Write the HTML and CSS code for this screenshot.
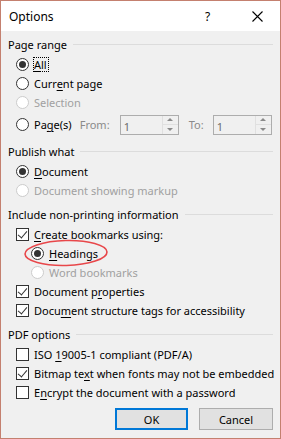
FILE: index.html
```html
<!DOCTYPE html>
<html lang="en">
<head>
  <meta charset="UTF-8">
  <title>Options</title>
  <link rel="stylesheet" href="styles.css">
</head>
<body>
  <div class="dialog">
    <div class="titlebar">
      <span class="title">Options</span>
      <span class="help">?</span>
      <svg class="close" width="11" height="11" viewBox="0 0 11 11"><path d="M0.5 0.5 L10.5 10.5 M10.5 0.5 L0.5 10.5" stroke="#000" stroke-width="1.1" fill="none"/></svg>
    </div>

    <div class="content">
      <!-- Page range -->
      <div class="group-title first"><span>Page range</span><i></i></div>
      <div class="row"><span class="radio checked"></span><span class="label focus"><u>A</u>ll</span></div>
      <div class="row"><span class="radio"></span><span class="label">Curr<u>e</u>nt page</span></div>
      <div class="row disabled"><span class="radio"></span><span class="label">Selection</span></div>
      <div class="row pages">
        <span class="radio"></span><span class="label">Pa<u>g</u>e(s)</span>
        <span class="spin-label from">From:</span>
        <span class="spin"><span class="spin-value">1</span><span class="spin-btns"><b class="up"></b><b class="down"></b></span></span>
        <span class="spin-label to">To:</span>
        <span class="spin"><span class="spin-value">1</span><span class="spin-btns"><b class="up"></b><b class="down"></b></span></span>
      </div>

      <!-- Publish what -->
      <div class="group-title"><span>Publish what</span><i></i></div>
      <div class="row"><span class="radio checked"></span><span class="label"><u>D</u>ocument</span></div>
      <div class="row disabled"><span class="radio"></span><span class="label">Document showing markup</span></div>

      <!-- Include non-printing information -->
      <div class="group-title"><span>Include non-printing information</span><i></i></div>
      <div class="row"><span class="check checked"></span><span class="label"><u>C</u>reate bookmarks using:</span></div>
      <div class="row sub marked">
        <span class="radio checked"></span><span class="label"><u>H</u>eadings</span>
        <svg class="mark" width="86" height="28" viewBox="0 0 86 28"><ellipse cx="43" cy="14" rx="41" ry="12.5" fill="none" stroke="#e8474a" stroke-width="1.6" transform="rotate(-1.5 43 14)"/></svg>
      </div>
      <div class="row sub disabled"><span class="radio"></span><span class="label">Word bookmarks</span></div>
      <div class="row"><span class="check checked"></span><span class="label">Document p<u>r</u>operties</span></div>
      <div class="row"><span class="check checked"></span><span class="label">Docu<u>m</u>ent structure tags for accessibility</span></div>

      <!-- PDF options -->
      <div class="group-title"><span>PDF options</span><i></i></div>
      <div class="row"><span class="check"></span><span class="label">ISO <u>1</u>9005-1 compliant (PDF/A)</span></div>
      <div class="row"><span class="check checked"></span><span class="label">Bitmap te<u>x</u>t when fonts may not be embedded</span></div>
      <div class="row"><span class="check"></span><span class="label">E<u>n</u>crypt the document with a password</span></div>

      <div class="buttons">
        <button class="btn default">OK</button>
        <button class="btn">Cancel</button>
      </div>
    </div>
  </div>
</body>
</html>
```

FILE: styles.css
```css
* {
  box-sizing: border-box;
}

html, body {
  margin: 0;
  padding: 0;
}

body {
  width: 281px;
  height: 439px;
  font-family: "Noto Sans", "Open Sans", sans-serif;
  font-size: 11px;
  color: #000;
  overflow: hidden;
}

.dialog {
  width: 281px;
  height: 439px;
  border: 1px solid #c4806f;
  background: #f0f0f0;
  display: flex;
  flex-direction: column;
}

.titlebar {
  height: 30px;
  background: #fff;
  display: flex;
  align-items: center;
  padding-left: 8px;
}

.title {
  flex: 1;
  font-size: 12px;
  margin-top: 1px;
}

.help {
  width: 12px;
  margin-right: 35px;
  font-size: 12px;
  margin-top: 1px;
}

.close {
  margin-right: 17px;
  margin-top: 1px;
}

.content {
  padding: 0 7px 0 7px;
  display: flex;
  flex-direction: column;
}

/* group headings with the rule after them */
.group-title {
  height: 16px;
  display: flex;
  align-items: center;
  margin-top: 6px;
  margin-bottom: 3px;
  white-space: nowrap;
}

.group-title.first {
  margin-top: 5px;
}

.group-title i {
  flex: 1;
  height: 1px;
  background: #dcdcdc;
  margin-left: 6px;
  margin-top: 1px;
}

.row {
  height: 19px;
  display: flex;
  align-items: center;
  padding-left: 8px;
  white-space: nowrap;
  position: relative;
}

.row.sub {
  padding-left: 23px;
}

.row.disabled {
  color: #a0a0a0;
}

.label {
  margin-left: 4px;
  line-height: 15px;
  padding: 0 1px;
}

.label u {
  text-decoration-thickness: 1px;
  text-underline-offset: 2px;
}

.label.focus {
  outline: 1px dotted #000;
  outline-offset: -1px;
  padding: 0 2px 0 1px;
}

.radio {
  width: 13px;
  height: 13px;
  border: 1px solid #333;
  border-radius: 50%;
  background: #fff;
  display: flex;
  align-items: center;
  justify-content: center;
  flex: none;
}

.radio.checked::after {
  content: "";
  width: 7px;
  height: 7px;
  border-radius: 50%;
  background: #333;
}

.disabled .radio {
  border-color: #cccccc;
}

.check {
  width: 13px;
  height: 13px;
  border: 1px solid #333;
  background: #fff;
  flex: none;
  position: relative;
}

.check.checked::after {
  content: "";
  position: absolute;
  left: 3px;
  top: 0px;
  width: 4px;
  height: 8px;
  border-right: 1px solid #333;
  border-bottom: 1px solid #333;
  transform: rotate(40deg);
}

/* Page(s) row with the disabled spin boxes */
.row.pages {
  height: 25px;
}

.spin-label {
  color: #8a8a8a;
}

.spin-label.from {
  margin-left: 7px;
  width: 40px;
}

.spin-label.to {
  margin-left: 10px;
  width: 24px;
}

.spin {
  width: 59px;
  height: 20px;
  border: 1px solid #adadad;
  background: #f0f0f0;
  display: flex;
}

.spin-value {
  flex: 1;
  color: #6d6d6d;
  padding: 3px 0 0 3px;
  line-height: 15px;
}

.spin-btns {
  width: 16px;
  display: flex;
  flex-direction: column;
  border-left: 1px solid #e0e0e0;
}

.spin-btns b {
  flex: 1;
  display: flex;
  align-items: center;
  justify-content: center;
}

.spin-btns b.up {
  border-bottom: 1px solid #e0e0e0;
}

.spin-btns b::after {
  content: "";
  border-left: 3px solid transparent;
  border-right: 3px solid transparent;
}

.spin-btns b.up::after {
  border-bottom: 3px solid #8a8a8a;
}

.spin-btns b.down::after {
  border-top: 3px solid #8a8a8a;
}

.mark {
  position: absolute;
  left: 15px;
  top: -5px;
  pointer-events: none;
}

.buttons {
  display: flex;
  justify-content: flex-end;
  gap: 11px;
  margin-top: 6px;
}

.btn {
  font-family: "Noto Sans", "Open Sans", sans-serif;
  font-size: 11px;
  width: 74px;
  height: 22px;
  background: #e1e1e1;
  border: 1px solid #adadad;
  color: #000;
  padding: 0;
  margin: 0;
}

.btn.default {
  width: 73px;
  border: 2px solid #0078d7;
}
```
